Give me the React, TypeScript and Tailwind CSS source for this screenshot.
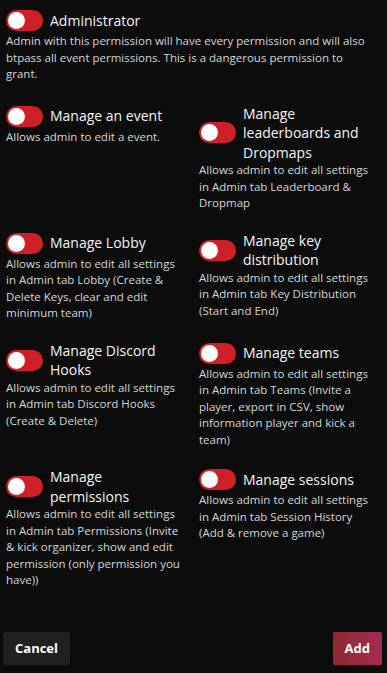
import React from 'react';

interface PermissionProps {
  title: string;
  lines: string[];
  wide?: boolean;
}

const Toggle: React.FC = () => (
  <span className="flex shrink-0 pt-1">
    <span className="relative block h-[21px] w-[37px] rounded-full bg-[#cf2027]">
      <span className="absolute left-[2px] top-[2px] h-[17px] w-[17px] rounded-full bg-white" />
    </span>
  </span>
);

const Permission: React.FC<PermissionProps> = ({ title, lines, wide }) => (
  <div className={wide ? 'col-span-2 mb-[2px]' : ''}>
    <div className="flex min-h-[29px] items-center">
      <Toggle />
      <span className={`ml-[7px] pt-1 text-[14px] leading-[19.5px] text-[#f4f4f4] ${wide ? '' : 'max-w-[125px]'}`}>{title}</span>
    </div>
    <p className="text-[11.5px] leading-[16.5px] text-[#d6d6d6]">
      {lines.map((l, i) => (
        <span key={i} className="block whitespace-nowrap">{l}</span>
      ))}
    </p>
  </div>
);

const perms = [
  { title: 'Manage an event', lines: ['Allows admin to edit a event.'] },
  { title: 'Manage leaderboards and Dropmaps', lines: ['Allows admin to edit all settings', 'in Admin tab Leaderboard &', 'Dropmap'] },
  { title: 'Manage Lobby', lines: ['Allows admin to edit all settings', 'in Admin tab Lobby (Create &', 'Delete Keys, clear and edit', 'minimum team)'] },
  { title: 'Manage key distribution', lines: ['Allows admin to edit all settings', 'in Admin tab Key Distribution', '(Start and End)'] },
  { title: 'Manage Discord Hooks', lines: ['Allows admin to edit all settings', 'in Admin tab Discord Hooks', '(Create & Delete)'] },
  { title: 'Manage teams', lines: ['Allows admin to edit all settings', 'in Admin tab Teams (Invite a', 'player, export in CSV, show', 'information player and kick a', 'team)'] },
  { title: 'Manage permissions', lines: ['Allows admin to edit all settings', 'in Admin tab Permissions (Invite', '& kick organizer, show and edit', 'permission (only permission you', 'have))'] },
  { title: 'Manage sessions', lines: ['Allows admin to edit all settings', 'in Admin tab Session History', '(Add & remove a game)'] },
];

export default function App() {
  return (
    <div className="flex h-[673px] flex-col bg-[#0c0c0c] px-[6px] pb-2 pt-[4px] font-['Open_Sans',sans-serif]">
      <div className="grid grid-cols-2 gap-x-[11px] gap-y-[15px]">
        <Permission
          wide
          title="Administrator"
          lines={[
            'Admin with this permission will have every permission and will also',
            'btpass all event permissions. This is a dangerous permission to',
            'grant.',
          ]}
        />
        {perms.map((p) => (
          <Permission key={p.title} title={p.title} lines={p.lines} />
        ))}
      </div>

      {/* Actions */}
      <div className="-ml-[3px] -mr-px mt-auto flex items-center justify-between">
        <button className="h-[33px] rounded-[2px] bg-[#212121] px-3 text-[13px] font-bold text-white">Cancel</button>
        <button className="h-[33px] rounded-[2px] bg-gradient-to-r from-[#8c2a2f] to-[#a42a52] px-3 text-[13px] font-bold text-white">Add</button>
      </div>
    </div>
  );
}
